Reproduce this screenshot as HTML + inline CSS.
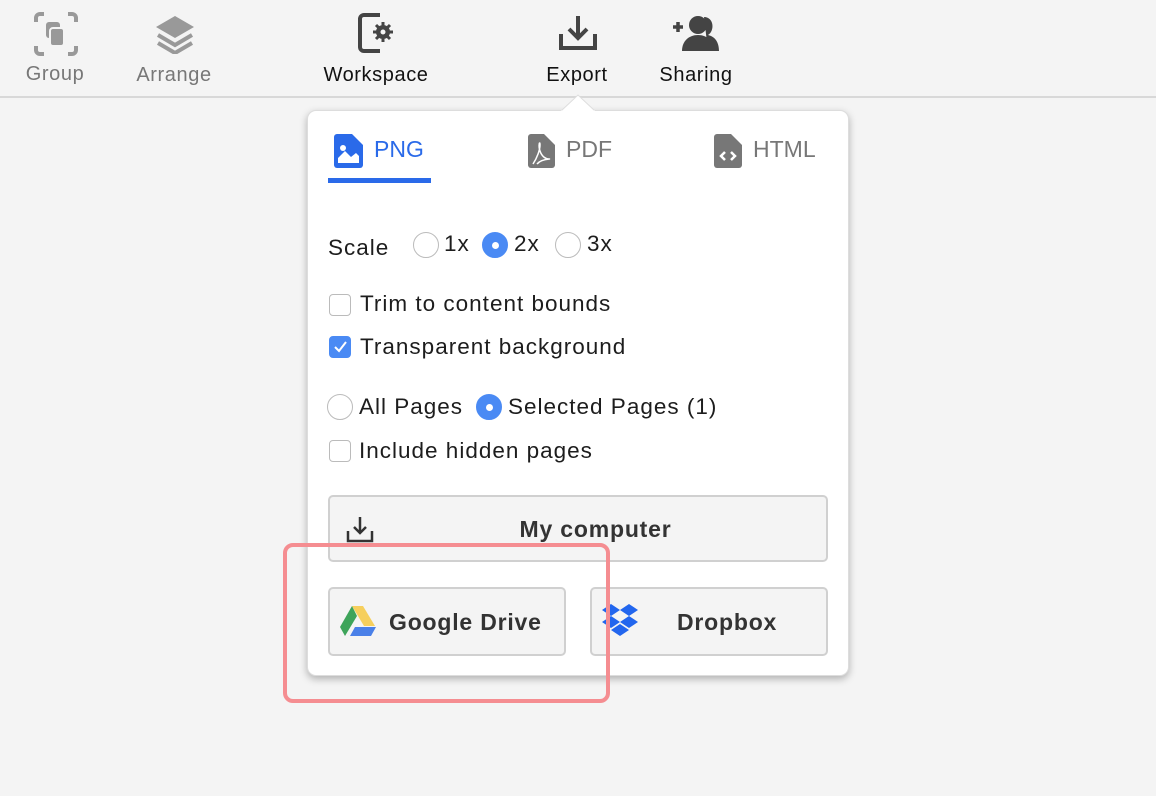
<!DOCTYPE html>
<html><head><meta charset="utf-8"><style>
*{box-sizing:border-box;margin:0;padding:0}
body{width:1156px;height:796px;background:#f4f4f4;font-family:"Liberation Sans",Arial,sans-serif;position:relative;overflow:hidden;color:#1d1d1d}
.a{position:absolute}
.tl{font-size:20px;text-align:center;letter-spacing:0.6px}
.panel{left:307px;top:110px;width:542px;height:566px;background:#fff;border-radius:9px;box-shadow:0 3px 8px rgba(0,0,0,.28);border:1px solid #ddd}
.t{font-size:22.5px;line-height:24px;letter-spacing:1px;white-space:nowrap}
.rad{width:26px;height:26px;border-radius:50%;border:1px solid #bbb;background:#fff}
.rad.on{background:#4a8af4;border-color:#4a8af4}
.rad.on:after{content:"";position:absolute;left:9px;top:9px;width:7px;height:7px;border-radius:50%;background:#fff}
.cb{width:22px;height:22px;border-radius:4px;border:1px solid #bbb;background:#fff}
.btn{background:#f4f4f4;border:2px solid #d0d0d0;border-radius:5px}
.bt{font-weight:bold;font-size:23px;color:#333;letter-spacing:0.8px;white-space:nowrap}
</style></head><body>
<div class="a" style="left:0;top:96px;width:1156px;height:2px;background:#d8d8d8"></div>
<svg class="a" style="left:34px;top:12px" width="44" height="44" viewBox="0 0 44 44" fill="none" stroke="#999" stroke-width="4"><path d="M2 10V6a4 4 0 0 1 4-4h4M34 2h4a4 4 0 0 1 4 4v4M42 34v4a4 4 0 0 1-4 4h-4M10 42H6a4 4 0 0 1-4-4v-4"/><rect x="12" y="10" width="14" height="16" rx="3" fill="#999" stroke="none"/><rect x="16" y="16" width="14" height="18" rx="3" fill="#999" stroke="#f4f4f4" stroke-width="2"/></svg>
<div class="a tl" style="left:15px;top:63px;width:80px;color:#777">Group</div>
<svg class="a" style="left:154px;top:14px" width="42" height="40" viewBox="0 0 42 40"><path d="M21 2L40 13L21 24L2 13Z" fill="#999"/><path d="M4 21L21 31L38 21" stroke="#999" stroke-width="4" fill="none"/><path d="M4 29L21 39L38 29" stroke="#999" stroke-width="4" fill="none"/></svg>
<div class="a tl" style="left:124px;top:64px;width:100px;color:#777">Arrange</div>
<svg class="a" style="left:356px;top:12px" width="42" height="42" viewBox="0 0 42 42"><path d="M24 3H8a4 4 0 0 0-4 4v28a4 4 0 0 0 4 4h16" stroke="#444" stroke-width="4" fill="none"/><circle cx="27" cy="20" r="7" fill="#444"/><path d="M27 10v20M17 20h20M20 13l14 14M34 13L20 27" stroke="#444" stroke-width="3"/><circle cx="27" cy="20" r="2.5" fill="#f4f4f4"/></svg>
<div class="a tl" style="left:305px;top:64px;width:142px;color:#111">Workspace</div>
<svg class="a" style="left:558px;top:14px" width="40" height="38" viewBox="0 0 40 38" fill="none" stroke="#444" stroke-width="4"><path d="M20 2v22M11 15l9 9 9-9"/><path d="M3 20v14h34V20"/></svg>
<div class="a tl" style="left:532px;top:64px;width:90px;color:#111">Export</div>
<svg class="a" style="left:670px;top:14px" width="52" height="38" viewBox="0 0 52 38"><path d="M3 13h10M8 8v10" stroke="#444" stroke-width="3.5"/><path d="M34 3c10 0 11 14 4 18 9 2 11 10 11 16H38" fill="#444"/><circle cx="28" cy="11" r="9" fill="#444"/><path d="M12 37c0-10 7-16 16-16s16 6 16 16z" fill="#444"/></svg>
<div class="a tl" style="left:646px;top:64px;width:100px;color:#111">Sharing</div>
<div class="a panel"></div>
<svg class="a" style="left:561px;top:94px" width="34" height="18" viewBox="0 0 34 18"><path d="M0 17L17 1L34 17" fill="#fff" stroke="#ddd" stroke-width="1"/><rect x="0" y="16.5" width="34" height="2" fill="#fff"/></svg>
<svg class="a" style="left:334px;top:134px" width="29" height="34" viewBox="0 0 29 34"><path d="M3 0h15l11 11v20a3 3 0 0 1-3 3H3a3 3 0 0 1-3-3V3a3 3 0 0 1 3-3z" fill="#2a6ae9"/><path d="M4 29V24l7-7 6 6 5-4 3 3v7z" fill="#fff"/><circle cx="9" cy="14" r="3" fill="#fff"/></svg>
<div class="a" style="left:374px;top:136px;font-size:23px;color:#2a6ae9">PNG</div>
<div class="a" style="left:328px;top:178px;width:103px;height:5px;background:#2a6ae9"></div>
<svg class="a" style="left:528px;top:134px" width="27" height="34" viewBox="0 0 27 34"><path d="M3 0h13l11 11v20a3 3 0 0 1-3 3H3a3 3 0 0 1-3-3V3a3 3 0 0 1 3-3z" fill="#777"/><path d="M5 30c4-6 7-14 7-19s-2 0 0 6 6 8 9 8-8 0-12 5" stroke="#fff" stroke-width="1.5" fill="none"/></svg>
<div class="a" style="left:566px;top:136px;font-size:23px;color:#777">PDF</div>
<svg class="a" style="left:714px;top:134px" width="28" height="34" viewBox="0 0 28 34"><path d="M3 0h14l11 11v20a3 3 0 0 1-3 3H3a3 3 0 0 1-3-3V3a3 3 0 0 1 3-3z" fill="#777"/><path d="M11 18l-4 4 4 4M17 18l4 4-4 4" stroke="#fff" stroke-width="2.5" fill="none"/></svg>
<div class="a" style="left:753px;top:136px;font-size:23px;color:#777">HTML</div>
<div class="a t" style="left:328px;top:236px">Scale</div>
<div class="a rad" style="left:413px;top:232px"></div><div class="a t" style="left:444px;top:232px">1x</div>
<div class="a rad on" style="left:482px;top:232px"></div><div class="a t" style="left:514px;top:232px">2x</div>
<div class="a rad" style="left:555px;top:232px"></div><div class="a t" style="left:587px;top:232px">3x</div>
<div class="a cb" style="left:329px;top:294px"></div><div class="a t" style="left:360px;top:292px">Trim to content bounds</div>
<div class="a cb" style="left:329px;top:336px;background:#4a8af4;border-color:#4a8af4"><svg width="22" height="22" viewBox="0 0 22 22" style="position:absolute;left:-1px;top:-1px"><path d="M6 11l4 4 7-9" stroke="#fff" stroke-width="2" fill="none"/></svg></div><div class="a t" style="left:360px;top:335px">Transparent background</div>
<div class="a rad" style="left:327px;top:394px"></div><div class="a t" style="left:359px;top:395px">All Pages</div>
<div class="a rad on" style="left:476px;top:394px"></div><div class="a t" style="left:508px;top:395px">Selected Pages (1)</div>
<div class="a cb" style="left:329px;top:440px"></div><div class="a t" style="left:359px;top:439px">Include hidden pages</div>
<div class="a btn" style="left:328px;top:495px;width:500px;height:67px"></div>
<svg class="a" style="left:346px;top:515px" width="28" height="28" viewBox="0 0 28 28" fill="none" stroke="#333" stroke-width="2.5"><path d="M14 2v16M8 12l6 6 6-6"/><path d="M2 16v10h24V16"/></svg>
<div class="a bt" style="left:328px;top:516px;width:535px;text-align:center">My computer</div>
<div class="a btn" style="left:328px;top:587px;width:238px;height:69px"></div>
<svg class="a" style="left:340px;top:605px" width="36" height="32" viewBox="0 0 36 32"><path d="M12 1h11l12 20H24z" fill="#f6cf5d"/><path d="M12 1L0 22l5 9 12-20z" fill="#3ea45a"/><path d="M10 31h21l5-9H15z" fill="#4a80e8"/></svg>
<div class="a bt" style="left:389px;top:609px">Google Drive</div>
<div class="a btn" style="left:590px;top:587px;width:238px;height:69px"></div>
<svg class="a" style="left:602px;top:604px" width="36" height="32" viewBox="0 0 36 32" fill="#2266ee"><path d="M9 0l9 6-9 6-9-6zM27 0l9 6-9 6-9-6zM0 18l9-6 9 6-9 6zM36 18l-9-6-9 6 9 6zM9 26l9-6 9 6-9 6z"/></svg>
<div class="a bt" style="left:677px;top:609px">Dropbox</div>
<div class="a" style="left:283px;top:543px;width:327px;height:160px;border:4px solid #f58d91;border-radius:10px"></div>
</body></html>
